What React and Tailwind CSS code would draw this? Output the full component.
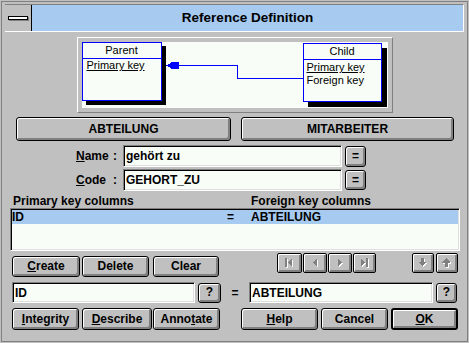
import React from 'react';

const sunken =
  'border border-t-[#808080] border-l-[#808080] border-b-white border-r-white bg-[#f8fdf8] shadow-[inset_1px_1px_0_#000000,inset_-1px_-1px_0_#dfdfdf]';

function Btn({ className = '', children, isDefault }) {
  return (
    <div
      className={`flex items-center justify-center rounded-[3px] border-black bg-[#c0c0c0] text-[12px] font-bold leading-none shadow-[inset_1px_1px_0_#ffffff,inset_-2px_-2px_0_#808080] ${
        isDefault ? 'border-2' : 'border'
      } ${className}`}
    >
      <span className="-mt-px">{children}</span>
    </div>
  );
}

function Glyph({ children }) {
  // disabled look: white copy offset 1px, grey on top
  return (
    <svg width="11" height="11" viewBox="0 0 11 11" shapeRendering="crispEdges">
      <g fill="#ffffff" transform="translate(1 1)">{children}</g>
      <g fill="#808080">{children}</g>
    </svg>
  );
}

function NavBtn({ className = '', children }) {
  return (
    <div
      className={`flex h-[20px] items-center justify-center rounded-[2px] border border-black bg-[#c0c0c0] shadow-[inset_1px_1px_0_#ffffff,inset_-2px_-2px_0_#808080] ${className}`}
    >
      <span className="-mt-px">
        <Glyph>{children}</Glyph>
      </span>
    </div>
  );
}

function Diagram() {
  return (
    <div className="relative h-[66px] w-[306px] bg-[#f8fdf8]">
      <svg className="absolute left-0 top-0" width="306" height="66" shapeRendering="crispEdges">
        <g stroke="#0000ff" strokeWidth="1" fill="none">
          <path d="M83 23.5 H155.5 V36.5 H221" />
        </g>
        <polygon points="85,23.5 90,20 97,20 97,27 90,27" fill="#0000ff" />
      </svg>
      <div className="absolute left-0 top-0 h-[59px] w-[80px] border border-[#0000ff] bg-[#f8fdf8] text-[11px] shadow-[4px_4px_0_#000000]">
        <div className="flex h-[16px] items-center justify-center border-b border-[#0000ff]">Parent</div>
        <div className="pl-[4px] leading-[13px] underline">Primary key</div>
      </div>
      <div className="absolute left-[221px] top-[1px] h-[59px] w-[79px] border border-[#0000ff] bg-[#f8fdf8] text-[11px] shadow-[5px_5px_0_#000000]">
        <div className="flex h-[16px] items-center justify-center border-b border-[#0000ff]">Child</div>
        <div className="pl-[3px] pt-px leading-[13px]">
          <div className="underline">Primary key</div>
          <div>Foreign key</div>
        </div>
      </div>
    </div>
  );
}

export default function App() {
  return (
    <div className="h-[343px] w-[469px] bg-[#c0c0c0] p-px font-['Liberation_Sans',Arial,sans-serif] text-black">
      <div className="h-full border border-[#808080] px-[3px] pt-[2px]">
        {/* title bar */}
        <div className="flex h-[28px] border-t border-r border-b border-t-[#808080] border-r-white border-b-white">
          <div className="flex w-[27px] items-center justify-center border-r border-black bg-[#c0c0c0]">
            <div className="h-[4px] w-[20px] border border-black bg-white shadow-[1px_1px_0_#808080]" />
          </div>
          <div className="flex flex-1 items-center justify-center bg-[#a6caf0] text-[13.5px] font-bold">
            Reference Definition
          </div>
        </div>

        {/* diagram */}
        <div className="mx-auto mt-[5px] w-[316px] border border-t-white border-l-white border-b-[#808080] border-r-[#808080] p-[4px]">
          <Diagram />
        </div>

        {/* table buttons */}
        <div className="mt-[4px] flex pl-[11px]">
          <Btn className="h-[24px] w-[215px]">ABTEILUNG</Btn>
          <Btn className="ml-[10px] h-[24px] w-[213px]">MITARBEITER</Btn>
        </div>

        {/* name / code */}
        <div className="mt-[4px] flex items-center pl-[71px] text-[12px] font-bold">
          <span className="w-[37px]">
            <u>N</u>ame
          </span>
          <span className="w-[10px]">:</span>
          <div className={`${sunken} flex h-[22px] w-[219px] items-center pl-[2px]`}>gehört zu</div>
          <Btn className="ml-[3px] h-[21px] w-[21px]">=</Btn>
        </div>
        <div className="mt-[2px] flex items-center pl-[71px] text-[12px] font-bold">
          <span className="w-[37px]">
            <u>C</u>ode
          </span>
          <span className="w-[10px]">:</span>
          <div className={`${sunken} flex h-[22px] w-[219px] items-center pl-[2px]`}>GEHORT_ZU</div>
          <Btn className="ml-[3px] h-[20px] w-[21px]">=</Btn>
        </div>

        {/* columns */}
        <div className="mt-[3px] flex h-[14px] items-center pl-[8px] text-[12px] font-bold">
          <span className="w-[238px]">Primary key columns</span>
          <span>Foreign key columns</span>
        </div>
        <div className={`${sunken} ml-[5px] h-[43px] w-[450px] p-px text-[12px] font-bold`}>
          <div className="flex h-[14px] items-center bg-[#a6caf0]">
            <span className="w-[215px]">ID</span>
            <span className="w-[24px]">=</span>
            <span>ABTEILUNG</span>
          </div>
        </div>

        {/* create / navigation */}
        <div className="mt-[2px] flex items-start pl-[7px]">
          <Btn className="mt-[3px] h-[21px] w-[68px]">
            <u>C</u>reate
          </Btn>
          <Btn className="ml-[2px] mt-[3px] h-[21px] w-[67px]">Delete</Btn>
          <Btn className="ml-[4px] mt-[3px] h-[21px] w-[66px]">Clear</Btn>
          <div className="ml-[58px] flex gap-px">
            <NavBtn className="w-[25px]">
              <rect x="1" y="1" width="2" height="9" />
              <polygon points="8,1 8,10 4,5.5" />
            </NavBtn>
            <NavBtn className="w-[24px]">
              <polygon points="7,1 7,10 3,5.5" />
            </NavBtn>
            <NavBtn className="w-[24px]">
              <polygon points="3,1 3,10 7,5.5" />
            </NavBtn>
            <NavBtn className="w-[23px]">
              <polygon points="2,1 2,10 6,5.5" />
              <rect x="7" y="1" width="2" height="9" />
            </NavBtn>
          </div>
          <NavBtn className="ml-[36px] w-[22px]">
            <rect x="3" y="1" width="3" height="4" />
            <polygon points="0.5,5 8.5,5 4.5,9.5" />
          </NavBtn>
          <NavBtn className="ml-[2px] w-[22px]">
            <polygon points="0.5,5.5 8.5,5.5 4.5,1" />
            <rect x="3" y="5" width="3" height="5" />
          </NavBtn>
        </div>

        {/* key inputs */}
        <div className="mt-[5px] flex items-center pl-[7px] text-[12px] font-bold">
          <div className={`${sunken} flex h-[21px] w-[183px] items-center pl-[2px]`}>ID</div>
          <Btn className="ml-[3px] h-[20px] w-[23px]">?</Btn>
          <span className="w-[28px] text-center">=</span>
          <div className={`${sunken} flex h-[21px] w-[184px] items-center pl-[2px]`}>ABTEILUNG</div>
          <Btn className="ml-[3px] h-[20px] w-[21px]">?</Btn>
        </div>

        {/* dialog buttons */}
        <div className="mt-[5px] flex pl-[7px]">
          <Btn className="h-[22px] w-[67px]">
            <u>I</u>ntegrity
          </Btn>
          <Btn className="ml-[3px] h-[22px] w-[70px]">
            <u>D</u>escribe
          </Btn>
          <Btn className="ml-[1px] h-[22px] w-[67px]">
            Anno<u>t</u>ate
          </Btn>
          <Btn className="ml-[21px] h-[22px] w-[77px]">
            <u>H</u>elp
          </Btn>
          <Btn className="ml-[3px] h-[22px] w-[67px]">Cancel</Btn>
          <Btn isDefault className="ml-[3px] h-[22px] w-[67px]">
            <u>O</u>K
          </Btn>
        </div>
      </div>
    </div>
  );
}
